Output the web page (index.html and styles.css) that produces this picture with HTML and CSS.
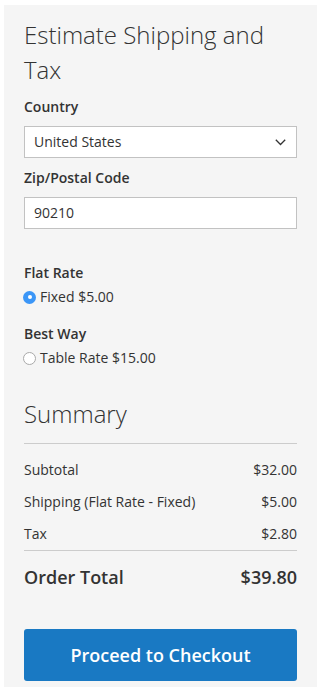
FILE: index.html
```html
<!DOCTYPE html>
<html lang="en">
<head>
<meta charset="utf-8">
<title>Summary</title>
<link rel="stylesheet" href="styles.css">
</head>
<body>
<div class="panel">
  <h2 class="title">Estimate Shipping and Tax</h2>
  <div class="field">
    <label class="label">Country</label>
    <div class="select">
      <span>United States</span>
      <svg class="chev" width="11" height="7" viewBox="0 0 11 7"><polyline points="0.8,0.8 5.5,5.5 10.2,0.8" fill="none" stroke="#333" stroke-width="1.3"/></svg>
    </div>
  </div>
  <div class="field">
    <label class="label">Zip/Postal Code</label>
    <div class="input">90210</div>
  </div>
  <div class="methods">
    <div class="carrier">Flat Rate</div>
    <div class="option"><span class="radio checked"></span><span>Fixed $5.00</span></div>
    <div class="carrier second">Best Way</div>
    <div class="option"><span class="radio"></span><span>Table Rate $15.00</span></div>
  </div>
  <h2 class="summary-title">Summary</h2>
  <div class="totals">
    <div class="row"><span>Subtotal</span><span>$32.00</span></div>
    <div class="row"><span>Shipping (Flat Rate - Fixed)</span><span>$5.00</span></div>
    <div class="row"><span>Tax</span><span>$2.80</span></div>
  </div>
  <div class="grand"><span>Order Total</span><span>$39.80</span></div>
  <button class="checkout">Proceed to Checkout</button>
</div>
</body>
</html>
```
FILE: styles.css
```css
html, body {
  margin: 0;
  padding: 0;
  background: #fff;
}
body {
  font-family: "Open Sans", "Liberation Sans", sans-serif;
  color: #333;
  font-size: 14px;
  line-height: 20px;
}
.panel {
  margin: 5px 3px 0 4px;
  padding: 12px 20px 6px;
  background: #f5f5f5;
}
.title {
  margin: 0 0 10px;
  font-size: 24px;
  line-height: 35px;
  font-weight: 300;
}
.field {
  margin-bottom: 10px;
}
.label {
  display: block;
  font-weight: 600;
  margin-bottom: 9px;
}
.select, .input {
  box-sizing: border-box;
  height: 32px;
  background: #fff;
  border: 1px solid #c2c2c2;
  display: flex;
  align-items: center;
  padding: 0 9px;
}
.select {
  justify-content: space-between;
  padding-right: 10px;
}
.chev {
  display: block;
}
.methods {
  margin-top: 34px;
}
.carrier {
  font-weight: 600;
  margin-bottom: 4px;
}
.carrier.second {
  margin-top: 17px;
}
.option {
  display: flex;
  align-items: center;
  gap: 4px;
}
.radio {
  box-sizing: border-box;
  width: 13px;
  height: 13px;
  border-radius: 50%;
  border: 1px solid #a9a9a9;
  background: #fff;
  position: relative;
  margin-left: -1px;
}
.radio.checked {
  border: none;
  background: #3b96f7;
}
.radio.checked::after {
  content: "";
  position: absolute;
  left: 4.5px;
  top: 4.5px;
  width: 4px;
  height: 4px;
  border-radius: 50%;
  background: #fff;
}
.summary-title {
  margin: 31px 0 0;
  font-size: 24px;
  line-height: 30px;
  font-weight: 300;
  padding-bottom: 14px;
  border-bottom: 1px solid #ccc;
}
.totals {
  padding-top: 10px;
  border-bottom: 1px solid #ccc;
}
.row {
  display: flex;
  justify-content: space-between;
  padding: 6px 0;
}
.grand {
  display: flex;
  justify-content: space-between;
  margin-top: 14px;
  font-size: 18px;
  line-height: 24px;
  font-weight: 600;
}
.checkout {
  display: block;
  width: 100%;
  height: 52px;
  margin-top: 40px;
  border: none;
  border-radius: 3px;
  background: #1979c3;
  color: #fff;
  font-family: "Open Sans", "Liberation Sans", sans-serif;
  font-size: 18px;
  font-weight: 600;
  padding: 0;
}
```
